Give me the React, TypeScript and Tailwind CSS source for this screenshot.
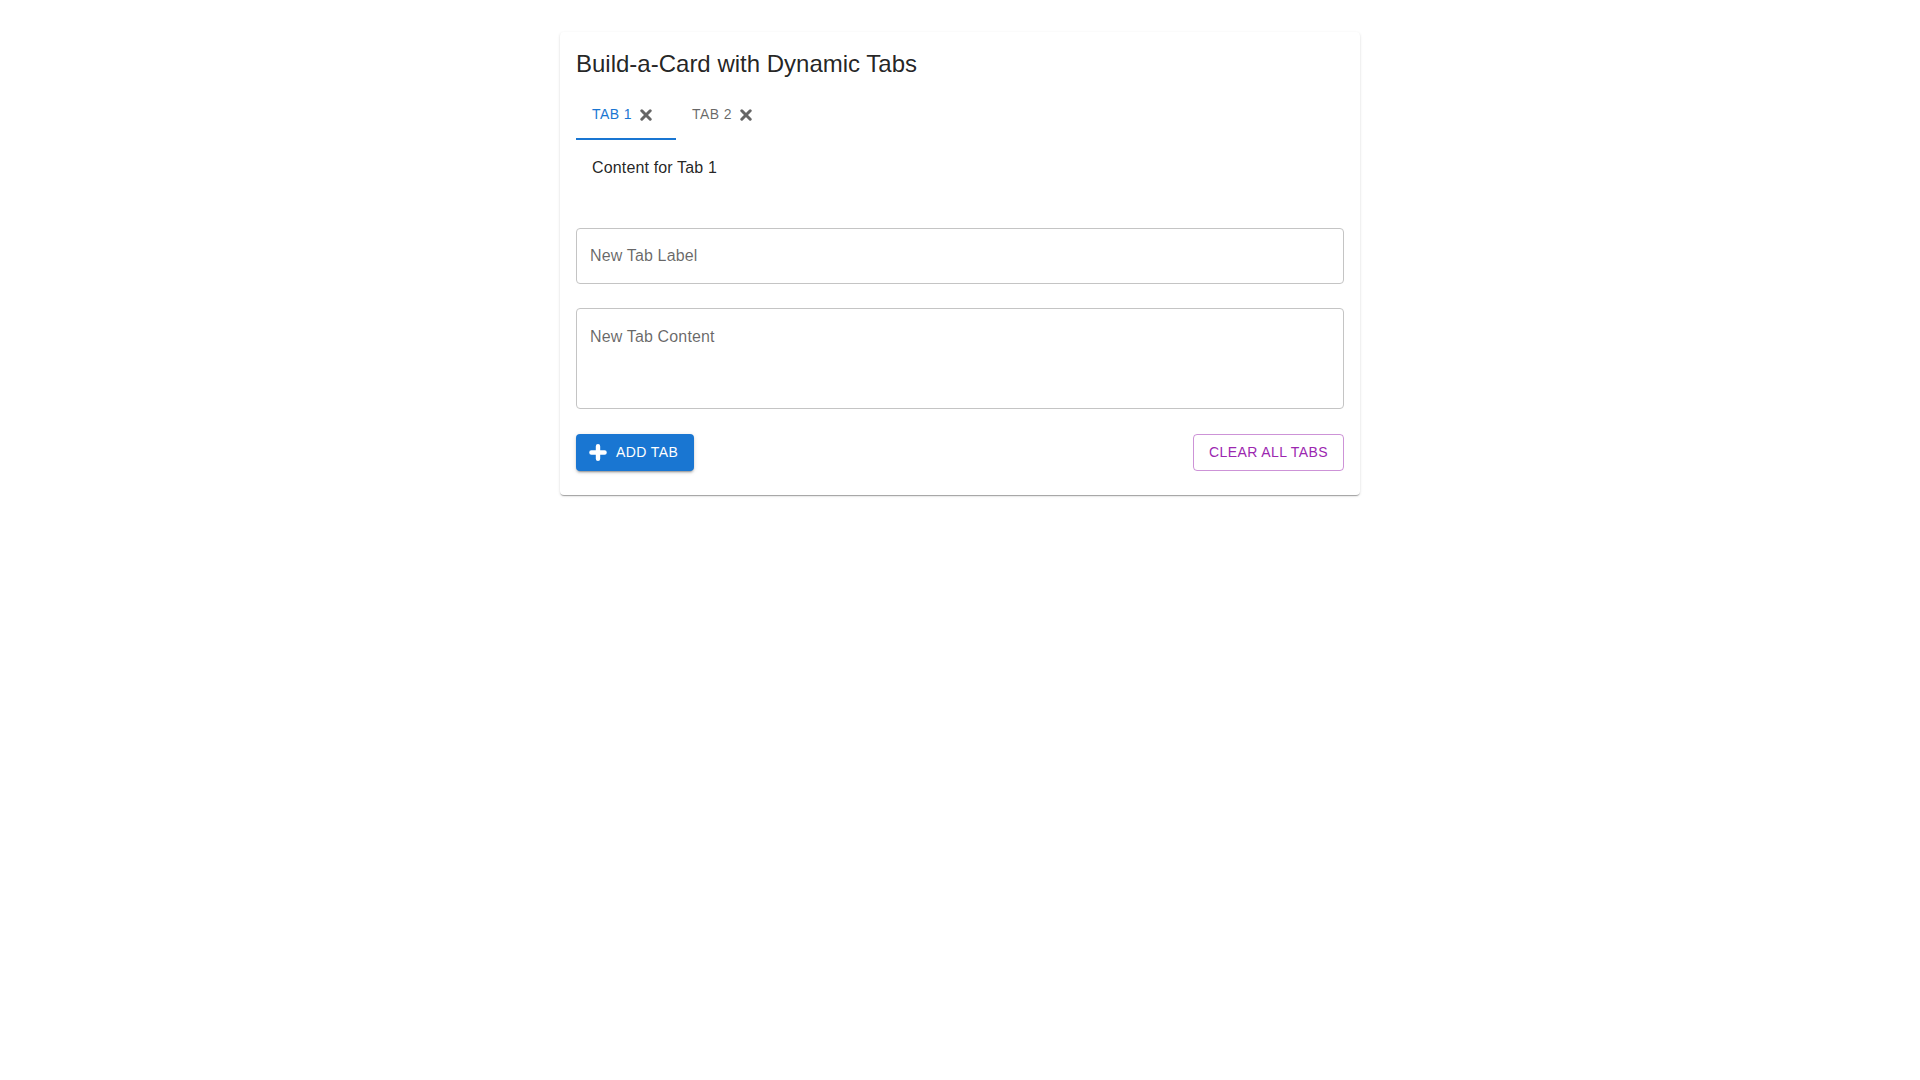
import { useState } from 'react';

interface TabItem {
  id: number;
  label: string;
  content: string;
}

const initialTabs: TabItem[] = [
  { id: 1, label: 'Tab 1', content: 'Content for Tab 1' },
  { id: 2, label: 'Tab 2', content: 'Content for Tab 2' },
];

function CloseGlyph() {
  return (
    <svg width="12" height="12" viewBox="0 0 12 12" className="shrink-0">
      <path d="M1.8 1.8 L10.2 10.2 M10.2 1.8 L1.8 10.2" stroke="#666666" strokeWidth="3" strokeLinecap="round" fill="none" />
    </svg>
  );
}

function PlusGlyph() {
  return (
    <svg width="18" height="17" viewBox="0 0 18 17" className="shrink-0">
      <path d="M9 2.2 V14.8 M2.4 8.5 H15.6" stroke="#ffffff" strokeWidth="4.4" strokeLinecap="round" fill="none" />
    </svg>
  );
}

export default function App() {
  const [tabs, setTabs] = useState<TabItem[]>(initialTabs);
  const [active, setActive] = useState(0);
  const [label, setLabel] = useState('');
  const [content, setContent] = useState('');

  function removeTab(id: number) {
    const next = tabs.filter((t) => t.id !== id);
    setTabs(next);
    if (active >= next.length) setActive(Math.max(0, next.length - 1));
  }

  function addTab() {
    if (!label.trim()) return;
    const id = tabs.length ? Math.max(...tabs.map((t) => t.id)) + 1 : 1;
    setTabs([...tabs, { id, label, content }]);
    setLabel('');
    setContent('');
  }

  const current = tabs[active];

  return (
    <div className="min-h-screen bg-white pt-8 font-['Liberation_Sans',Arial,sans-serif] text-black/[0.87]">
      <div className="mx-auto w-[800px] rounded bg-white px-4 pt-4 pb-6 shadow-[0px_2px_1px_-1px_rgba(0,0,0,0.2),0px_1px_1px_0px_rgba(0,0,0,0.14),0px_1px_3px_0px_rgba(0,0,0,0.12)]">
        <h1 className="text-[24px] leading-8 font-normal">Build-a-Card with Dynamic Tabs</h1>

        <div className="mt-3 flex h-12">
          {tabs.map((tab, i) => (
            <div
              key={tab.id}
              onClick={() => setActive(i)}
              className={
                i === active
                  ? 'flex h-12 w-[100px] cursor-pointer items-center border-b-2 border-[#1976d2] px-4 pt-[2px] pb-[2px] text-[#1976d2]'
                  : 'flex h-12 w-[100px] cursor-pointer items-center border-b-2 border-transparent px-4 pt-[2px] pb-[2px] text-black/60'
              }
            >
              <span className="text-[14px] leading-[17.5px] font-normal tracking-[0.4px] uppercase">{tab.label}</span>
              <button
                className="ml-2 flex items-center"
                onClick={(e) => {
                  e.stopPropagation();
                  removeTab(tab.id);
                }}
              >
                <CloseGlyph />
              </button>
            </div>
          ))}
        </div>

        <div className="px-4 pt-4 pb-4 text-[16px] leading-6 tracking-[0.15px]">{current ? current.content : ''}</div>

        <input
          value={label}
          onChange={(e) => setLabel(e.target.value)}
          placeholder="New Tab Label"
          className="mt-8 block h-14 w-full rounded border border-[#c4c4c4] px-[13px] text-[16px] tracking-[0.15px] text-black/[0.87] outline-none placeholder:text-black/60"
        />

        <textarea
          value={content}
          onChange={(e) => setContent(e.target.value)}
          placeholder="New Tab Content"
          className="mt-6 block h-[101px] w-full resize-none rounded border border-[#c4c4c4] px-[13px] py-[16px] text-[16px] leading-[23px] tracking-[0.15px] text-black/[0.87] outline-none placeholder:text-black/60"
        />

        <div className="mt-[25px] flex items-center justify-between">
          <button
            onClick={addTab}
            className="flex h-[37px] items-center rounded bg-[#1976d2] pr-4 pl-[13px] text-[14px] font-normal tracking-[0.4px] text-white uppercase shadow-[0px_3px_1px_-2px_rgba(0,0,0,0.2),0px_2px_2px_0px_rgba(0,0,0,0.14),0px_1px_5px_0px_rgba(0,0,0,0.12)]"
          >
            <PlusGlyph />
            <span className="ml-[9px]">Add Tab</span>
          </button>
          <button
            onClick={() => setTabs([])}
            className="flex h-[37px] items-center rounded border border-[#9c27b0]/50 px-[15px] text-[14px] font-normal tracking-[0.4px] text-[#9c27b0] uppercase"
          >
            Clear All Tabs
          </button>
        </div>
      </div>
    </div>
  );
}
